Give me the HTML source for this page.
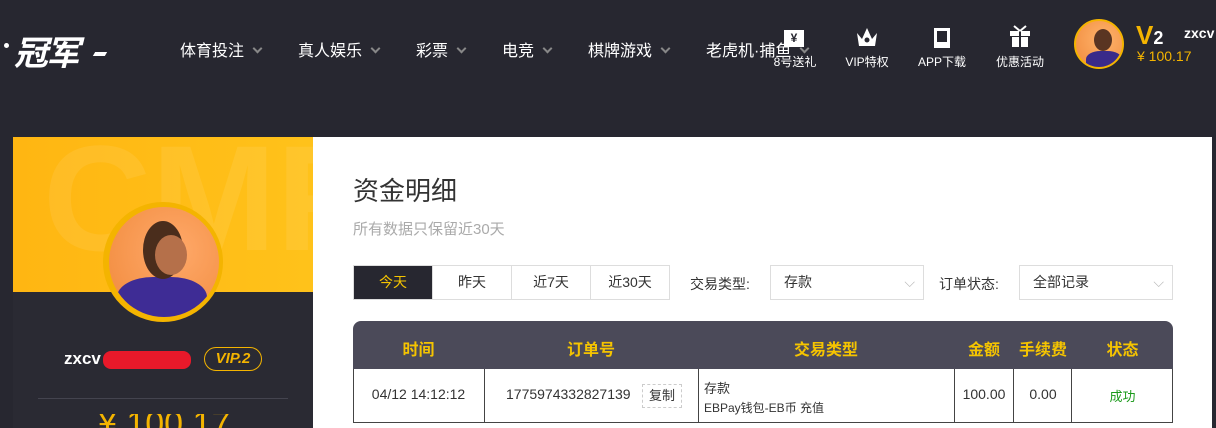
<!DOCTYPE html>
<html><head><meta charset="utf-8"><style>
*{margin:0;padding:0;box-sizing:border-box}
html,body{width:1216px;height:428px;overflow:hidden;background:#272730}
body{font-family:"Liberation Sans","Noto Sans CJK SC",sans-serif}
#w{position:relative;width:1216px;height:428px;overflow:hidden;background:#272730}
.a{position:absolute}
.nav{color:#fff;font-size:16px;top:37px}
.car{display:inline-block;width:7px;height:7px;border-right:2px solid #888;border-bottom:2px solid #888;transform:rotate(45deg);margin-left:10px;position:relative;top:-4px}
.ic{color:#fff;font-size:12px;top:53px;text-align:center}
.tab{top:265px;height:35px;border:1px solid #ddd;font-size:14px;text-align:center;line-height:33px;color:#333}
.th{color:#f5c400;font-weight:bold;font-size:16px;top:336px;text-align:center}
.td{font-size:14px;color:#333;top:386px;text-align:center}
.vl{top:369px;height:53px;width:1px;background:#444}
</style></head><body><div id="w">
<div class="a" style="left:4px;top:43px;width:5px;height:5px;background:#fff;border-radius:50%"></div>
<div class="a" style="left:14px;top:26px;color:#fff;font-size:34px;font-weight:bold;font-style:italic;letter-spacing:-2px">冠军</div>
<div class="a" style="left:94px;top:52px;width:12px;height:4px;background:#fff;transform:skewX(-30deg)"></div>
<div class="a nav" style="left:180px">体育投注<span class="car"></span></div>
<div class="a nav" style="left:298px">真人娱乐<span class="car"></span></div>
<div class="a nav" style="left:416px">彩票<span class="car"></span></div>
<div class="a nav" style="left:502px">电竞<span class="car"></span></div>
<div class="a nav" style="left:588px">棋牌游戏<span class="car"></span></div>
<div class="a nav" style="left:706px">老虎机·捕鱼<span class="car"></span></div>
<div class="a" style="left:784px;top:30px;width:20px;height:17px;background:#fff;color:#272730;font-size:12px;text-align:center;font-weight:bold;line-height:17px">¥</div>
<div class="a ic" style="left:770px;width:50px">8号送礼</div>
<svg class="a" style="left:855px;top:25px" width="24" height="22"><path d="M2 8 L7 14 L12 3 L17 14 L22 8 L20 21 L4 21Z" fill="#fff"/><circle cx="12" cy="15" r="2.5" fill="#272730"/></svg>
<div class="a ic" style="left:838px;width:58px">VIP特权</div>
<div class="a" style="left:934px;top:28px;width:16px;height:20px;border:3px solid #fff;border-bottom-width:6px"></div>
<div class="a ic" style="left:915px;width:54px">APP下载</div>
<svg class="a" style="left:1009px;top:25px" width="22" height="22"><rect x="1" y="6" width="20" height="5" fill="#fff"/><rect x="3" y="12" width="16" height="10" fill="#fff"/><rect x="10" y="6" width="2" height="16" fill="#272730"/><path d="M5 1 L11 6 M17 1 L11 6" stroke="#fff" stroke-width="2"/></svg>
<div class="a ic" style="left:994px;width:52px">优惠活动</div>
<div class="a" style="left:1074px;top:19px;width:50px;height:50px;border-radius:50%;background:radial-gradient(circle at 60% 40%,#ffb36b,#f08a3c);border:2px solid #f4b400;overflow:hidden"><div class="a" style="left:10px;top:30px;width:36px;height:20px;background:#3a2a8a;border-radius:40% 40% 0 0"></div><div class="a" style="left:18px;top:8px;width:18px;height:22px;background:#5a3522;border-radius:50%"></div></div>
<div class="a" style="left:1136px;top:20px;color:#f4b400;font-size:26px;font-weight:bold">V<span style="color:#fff;font-size:18px">2</span></div>
<div class="a" style="left:1137px;top:48px;color:#f4b400;font-size:14px">¥ 100.17</div>
<div class="a" style="left:1184px;top:25px;color:#fff;font-size:14px;font-weight:bold">zxcv</div>

<div class="a" style="left:13px;top:137px;width:300px;height:291px;background:#2a2a33;overflow:hidden">
<div class="a" style="left:0;top:0;width:300px;height:155px;background:linear-gradient(90deg,#ffb612,#ffc21a);overflow:hidden"><div class="a" style="left:30px;top:-25px;font-size:150px;font-weight:bold;color:rgba(255,255,255,0.08)">CMF</div></div>
<div class="a" style="left:90px;top:65px;width:120px;height:120px;border-radius:50%;background:#f4b400"></div>
<div class="a" style="left:96px;top:70px;width:110px;height:110px;border-radius:50%;background:radial-gradient(circle at 60% 40%,#ffa96a,#f0893a);overflow:hidden"><div class="a" style="left:8px;top:70px;width:90px;height:50px;background:#3e2c95;border-radius:40% 40% 0 0"></div><div class="a" style="left:34px;top:14px;width:40px;height:58px;background:#4a2d1c;border-radius:50%"></div><div class="a" style="left:46px;top:28px;width:32px;height:40px;background:#b5704a;border-radius:50%"></div></div>
<div class="a" style="left:51px;top:212px;color:#fff;font-size:17px;font-weight:bold">zxcv</div>
<div class="a" style="left:90px;top:214px;width:88px;height:18px;background:#e8192a;border-radius:8px"></div>
<div class="a" style="left:191px;top:210px;width:58px;height:24px;border:1.5px solid #f4b400;border-radius:12px;color:#f4b400;font-size:15px;font-weight:bold;font-style:italic;text-align:center;line-height:21px">VIP.2</div>
<div class="a" style="left:25px;top:261px;width:250px;height:1px;background:#44444f"></div>
<div class="a" style="left:85px;top:277px;color:#f4b400;font-size:34px;line-height:14px;height:14px;overflow:hidden;padding-top:0"><span style="position:relative;top:3px">¥ 100.17</span></div>
</div>

<div class="a" style="left:313px;top:137px;width:899px;height:291px;background:#fff"></div>
<div class="a" style="left:353px;top:171px;font-size:26px;color:#333">资金明细</div>
<div class="a" style="left:353px;top:218px;font-size:15px;color:#aaa">所有数据只保留近30天</div>
<div class="a tab" style="left:353px;width:80px;background:#272730;color:#f5c400;border-color:#ddd">今天</div>
<div class="a tab" style="left:432px;width:80px">昨天</div>
<div class="a tab" style="left:511px;width:80px">近7天</div>
<div class="a tab" style="left:590px;width:80px">近30天</div>
<div class="a" style="left:690px;top:274px;font-size:14px;color:#333">交易类型:</div>
<div class="a tab" style="left:770px;width:154px;text-align:left;padding-left:13px">存款<span style="position:absolute;right:8px;color:#bbb">⌵</span></div>
<div class="a" style="left:939px;top:274px;font-size:14px;color:#333">订单状态:</div>
<div class="a tab" style="left:1019px;width:154px;text-align:left;padding-left:13px">全部记录<span style="position:absolute;right:8px;color:#bbb">⌵</span></div>

<div class="a" style="left:353px;top:321px;width:820px;height:48px;background:#4b4a59;border-radius:8px 8px 0 0"></div>
<div class="a th" style="left:353px;width:131px">时间</div>
<div class="a th" style="left:484px;width:214px">订单号</div>
<div class="a th" style="left:698px;width:256px">交易类型</div>
<div class="a th" style="left:954px;width:60px">金额</div>
<div class="a th" style="left:1014px;width:58px">手续费</div>
<div class="a th" style="left:1072px;width:101px">状态</div>
<div class="a" style="left:353px;top:369px;width:820px;height:54px;border:1px solid #444;border-top:none"></div>
<div class="a vl" style="left:484px"></div><div class="a vl" style="left:698px"></div><div class="a vl" style="left:954px"></div><div class="a vl" style="left:1013px"></div><div class="a vl" style="left:1071px"></div>
<div class="a td" style="left:353px;width:131px">04/12 14:12:12</div>
<div class="a td" style="left:506px">1775974332827139</div>
<div class="a" style="left:642px;top:384px;width:40px;height:24px;border:1px dashed #ccc;font-size:13px;color:#333;text-align:center;line-height:22px">复制</div>
<div class="a" style="left:704px;top:378px;font-size:13px;color:#333">存款</div>
<div class="a" style="left:704px;top:399px;font-size:12px;color:#333">EBPay钱包-EB币 充值</div>
<div class="a td" style="left:954px;width:60px">100.00</div>
<div class="a td" style="left:1014px;width:58px">0.00</div>
<div class="a td" style="left:1072px;width:101px;color:#1a9a1a;font-size:13px">成功</div>
</div></body></html>
